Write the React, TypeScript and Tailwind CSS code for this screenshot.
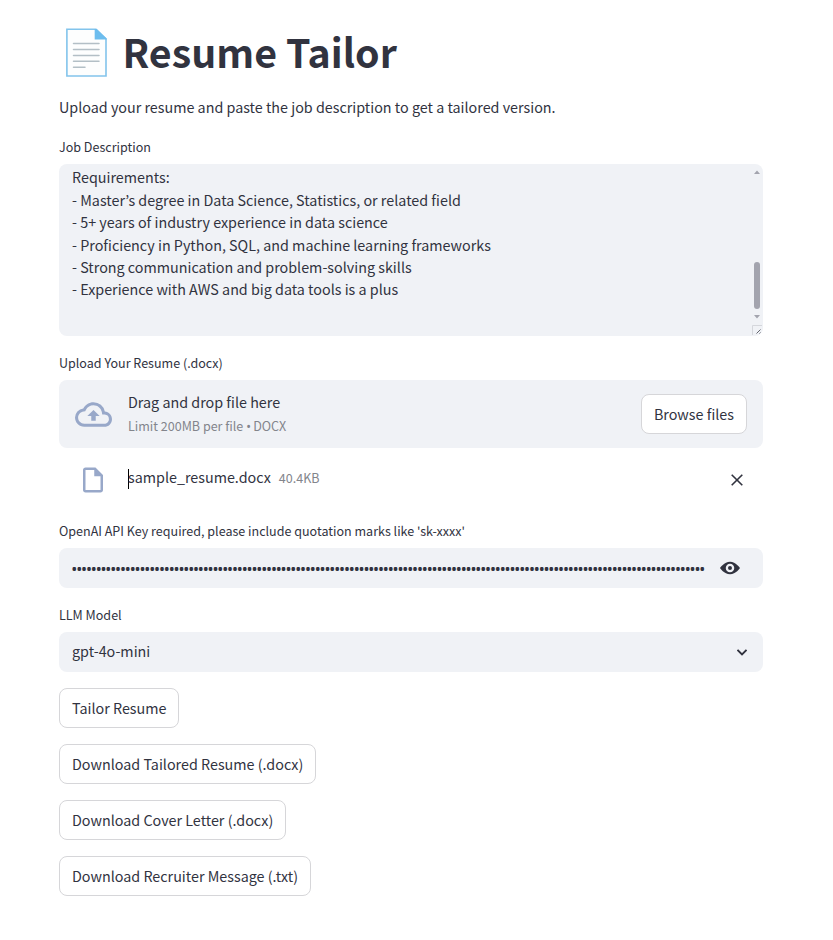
import type { ReactNode } from 'react';

const requirements = [
  'Requirements:',
  '- Master’s degree in Data Science, Statistics, or related field',
  '- 5+ years of industry experience in data science',
  '- Proficiency in Python, SQL, and machine learning frameworks',
  '- Strong communication and problem-solving skills',
  '- Experience with AWS and big data tools is a plus',
];

function Label({ children }: { children: ReactNode }) {
  return <div className="mb-1.5 flex h-[22px] items-center whitespace-nowrap text-[12.54px]">{children}</div>;
}

function Button({ children }: { children: ReactNode }) {
  return (
    <button className="flex h-10 w-fit items-center whitespace-nowrap rounded-lg border border-[#d6d6d9] bg-white px-3">
      {children}
    </button>
  );
}

function PageIcon() {
  return (
    <svg className="mt-[3px]" width="42" height="50" viewBox="0 0 42 50" fill="none">
      <path d="M.9 1.2H30L40 11v37H.9z" fill="#fdfefe" stroke="#82c4ec" strokeWidth="1.6" />
      <path d="M28.700 1h2L40.700 10.500V11.500H28.700z" fill="#6dbdee" />
      <path d="M7.500 15.500h25.500M7.500 21.500h25.500M7.500 27.500h25.500M7.500 33.300h25.500M7.500 39.300h11.500" stroke="#b3bfc6" strokeWidth="1.500" strokeLinecap="round" />
    </svg>
  );
}

export default function App() {
  return (
    <main
      className="flex h-[940px] w-[833px] flex-col bg-white pl-[59px] text-[14.33px] leading-6 text-[#31333f]"
      style={{ fontFamily: '"Noto Sans CJK KR", "Noto Sans", sans-serif' }}
    >
      <div className="flex w-[704px] flex-col">
        <h1 className="flex h-[95px] items-center pt-[7px] pl-[7px] text-[39.35px] leading-[52px] font-bold">
          <PageIcon />
          <span className="ml-[14.5px]">Resume Tailor</span>
        </h1>
        <p className="mb-[17px] h-6">Upload your resume and paste the job description to get a tailored version.</p>

        <Label>Job Description</Label>
        <div className="mb-4 flex h-[172px] justify-between rounded-lg bg-[#f0f2f6]">
          <div className="pt-[2.4px] pl-[13px] leading-[22.4px]">
            {requirements.map((line) => (
              <div key={line}>{line}</div>
            ))}
          </div>
          <svg width="13" height="172" viewBox="0 0 13 172">
            <path d="M4 10l3-3.500L10 10zM4 151h6l-3 3.500z" fill="#a3a4ae" />
            <rect x="4" y="98" width="6" height="47" rx="3" fill="#a3a4ae" />
            <path d="M2.500 171V161.500H12" stroke="#d5d7dc" fill="none" />
            <path d="M6.500 169.500l4-4M9.500 169.500l1-1" stroke="#62646d" fill="none" />
          </svg>
        </div>

        <Label>Upload Your Resume (.docx)</Label>
        <div className="flex h-[68px] items-center rounded-lg bg-[#f0f2f6] px-4">
          <svg width="37" height="37" viewBox="0 0 24 24" fill="#98a8c9">
            <path d="M19.350 10.040A7.490 7.490 0 0 0 12 4C9.110 4 6.600 5.640 5.350 8.040A5.994 5.994 0 0 0 0 14c0 3.310 2.690 6 6 6h13c2.760 0 5-2.240 5-5 0-2.640-2.050-4.780-4.650-4.960zM19 18H6c-2.210 0-4-1.790-4-4 0-2.050 1.530-3.760 3.560-3.970l1.070-.11.500-.95A5.469 5.469 0 0 1 12 6c2.620 0 4.880 1.860 5.390 4.430l.3 1.500 1.530.11A2.980 2.980 0 0 1 22 15c0 1.650-1.350 3-3 3zM8 13h2.550v3h2.900v-3H16l-4-4z" />
          </svg>
          <div className="ml-4 flex flex-1 flex-col">
            <span>Drag and drop file here</span>
            <span className="text-[12.54px] text-[#83858c]">
              Limit 200MB per file <span className="font-['Noto_Sans'] tracking-[-0.5px]">•</span> DOCX
            </span>
          </div>
          <Button>Browse files</Button>
        </div>
        <div className="flex h-[72px] items-start px-4">
          <svg className="mt-[17px] ml-[3.4px]" width="30" height="30" viewBox="0 0 24 24" fill="#98a8c9">
            <path d="M14 2H6c-1.100 0-1.990.9-1.990 2L4 20c0 1.100.89 2 1.990 2H18c1.100 0 2-.9 2-2V8l-6-6zM6 20V4h7v5h5v11H6z" />
          </svg>
          <div className="mt-4 ml-[19.600px] flex items-center">
            <span className="mt-1 -mr-px h-5 w-px bg-black" />
            <span>sample_resume.docx</span>
            <span className="ml-2 pt-0.5 text-[12.54px] text-[#83858c]">40.4KB</span>
          </div>
          <svg className="mt-[26px] mr-1 ml-auto" width="12" height="12" viewBox="0 0 12 12" fill="none" stroke="#31333f" strokeWidth="1.600">
            <path d="M.7.7l10.600 10.600M11.300.7L.7 11.300" />
          </svg>
        </div>

        <Label>OpenAI API Key required, please include quotation marks like 'sk-xxxx'</Label>
        <div className="mb-4 flex h-10 items-center rounded-lg bg-[#f0f2f6] pl-[12.3px]">
          <span className="w-[634.7px] whitespace-nowrap pt-0.5 font-['Noto_Sans'] text-[16px] tracking-[-1.148px]">
            {'•'.repeat(130)}
          </span>
          <svg className="ml-3.5" width="20" height="20" viewBox="0 0 8 8" fill="#31333f">
            <path d="M4.030 1.500C1.670 1.500 0 4 0 4s1.670 2.500 4.030 2.500C6.330 6.500 8 4 8 4S6.330 1.500 4.030 1.500zM4 2.300a1.700 1.700 0 1 1 0 3.400 1.700 1.700 0 0 1 0-3.400zM4 3.200a.8.8 0 1 0 0 1.600.8.8 0 0 0 0-1.600z" />
          </svg>
        </div>

        <Label>LLM Model</Label>
        <div className="mb-4 flex h-10 items-center justify-between rounded-lg bg-[#f0f2f6] pr-4 pl-[13px]">
          <span className="pb-0.5">gpt-4o-mini</span>
          <svg width="10" height="7" viewBox="0 0 10 7" fill="none" stroke="#31333f" strokeWidth="1.900">
            <path d="M.5.8L5 5.300 9.500.8" />
          </svg>
        </div>

        <div className="flex flex-col gap-4">
          <Button>Tailor Resume</Button>
          <Button>Download Tailored Resume (.docx)</Button>
          <Button>Download Cover Letter (.docx)</Button>
          <Button>Download Recruiter Message (.txt)</Button>
        </div>
      </div>
    </main>
  );
}
